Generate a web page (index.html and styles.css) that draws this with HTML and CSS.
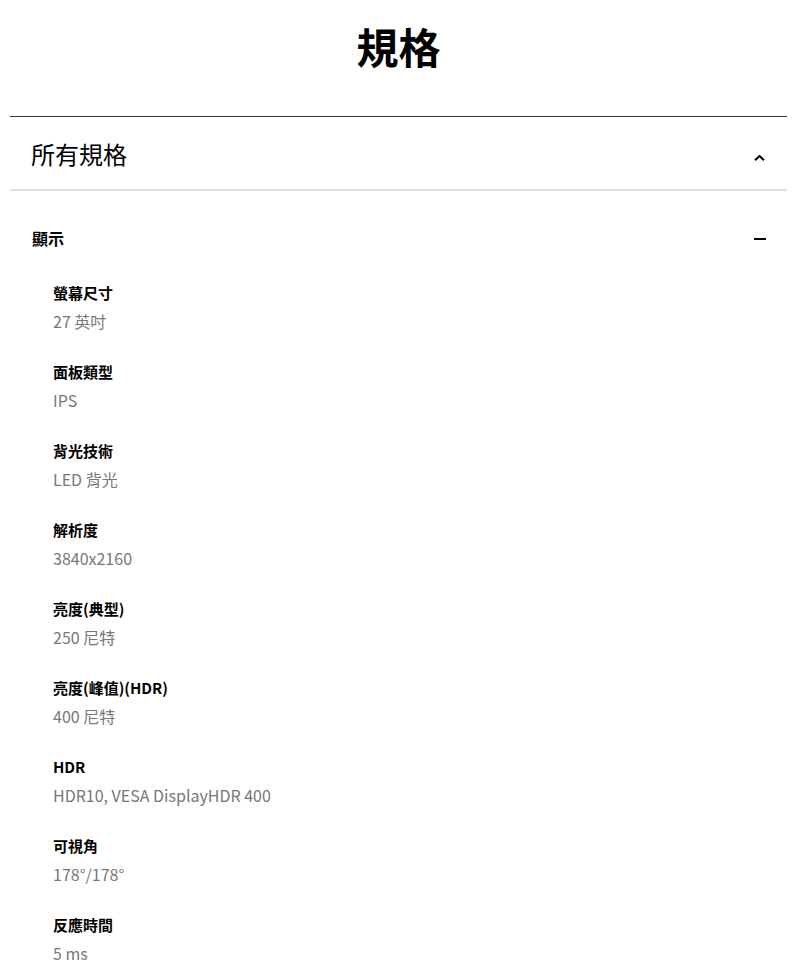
FILE: index.html
```html
<!DOCTYPE html>
<html>
<head>
  <meta charset="utf-8">
  <title>規格</title>
  <link rel="stylesheet" href="styles.css">
</head>
<body>
  <div class="container">
    <h1 class="title">規格</h1>

    <div class="section-header">
      <h2>所有規格</h2>
      <span class="chevron">
        <svg viewBox="0 0 11 6">
          <path d="M1 5.2L5.5 1l4.5 4.2"/>
        </svg>
      </span>
    </div>

    <div class="group">
      <div class="group-header">
        <h3>顯示</h3>
        <span class="minus"></span>
      </div>

      <div class="spec-list">
        <div class="spec">
          <div class="spec-label">螢幕尺寸</div>
          <div class="spec-value">27 英吋</div>
        </div>
        <div class="spec">
          <div class="spec-label">面板類型</div>
          <div class="spec-value">IPS</div>
        </div>
        <div class="spec">
          <div class="spec-label">背光技術</div>
          <div class="spec-value">LED 背光</div>
        </div>
        <div class="spec">
          <div class="spec-label">解析度</div>
          <div class="spec-value">3840x2160</div>
        </div>
        <div class="spec">
          <div class="spec-label">亮度(典型)</div>
          <div class="spec-value">250 尼特</div>
        </div>
        <div class="spec">
          <div class="spec-label">亮度(峰值)(HDR)</div>
          <div class="spec-value">400 尼特</div>
        </div>
        <div class="spec">
          <div class="spec-label">HDR</div>
          <div class="spec-value">HDR10, VESA DisplayHDR 400</div>
        </div>
        <div class="spec">
          <div class="spec-label">可視角</div>
          <div class="spec-value">178°/178°</div>
        </div>
        <div class="spec">
          <div class="spec-label">反應時間</div>
          <div class="spec-value">5 ms</div>
        </div>
      </div>
    </div>
  </div>
</body>
</html>
```

FILE: styles.css
```css
body {
  margin: 0;
  font-family: "Noto Sans CJK TC", "Noto Sans", sans-serif;
  color: #000000;
  background-color: #ffffff;
}

.container {
  width: 777px;
  margin-left: 10px;
}

.title {
  margin: 0;
  padding-top: 18px;
  height: 98px;
  font-size: 42px;
  line-height: 56px;
  font-weight: 700;
  text-align: center;
  border-bottom: 1px solid #333333;
}

.section-header {
  display: flex;
  align-items: center;
  justify-content: space-between;
  height: 66px;
  padding: 6px 21px 0 21px;
  border-bottom: 2px solid #dddddd;
}

.section-header h2 {
  margin: 0;
  font-size: 24px;
  font-weight: 400;
  line-height: 32px;
  margin-top: -4px;
}

.chevron {
  display: inline-flex;
  width: 11px;
  height: 6px;
  margin-right: 1px;
  margin-top: 4px;
}

.chevron svg {
  width: 11px;
  height: 6px;
  fill: none;
  stroke: #000000;
  stroke-width: 2;
}

.group-header {
  display: flex;
  align-items: center;
  justify-content: space-between;
  padding: 33px 21px 0 22px;
  height: 28px;
}

.group-header h3 {
  margin: 0;
  font-size: 16px;
  font-weight: 700;
  line-height: 28px;
}

.minus {
  width: 12px;
  height: 2px;
  margin-top: 1px;
  background-color: #000000;
}

.spec-list {
  display: flex;
  flex-direction: column;
  gap: 23px;
  padding: 27px 0 0 43px;
}

.spec-label {
  font-size: 15px;
  font-weight: 700;
  line-height: 28px;
}

.spec-value {
  font-size: 16px;
  line-height: 28px;
  color: #777777;
}
```
